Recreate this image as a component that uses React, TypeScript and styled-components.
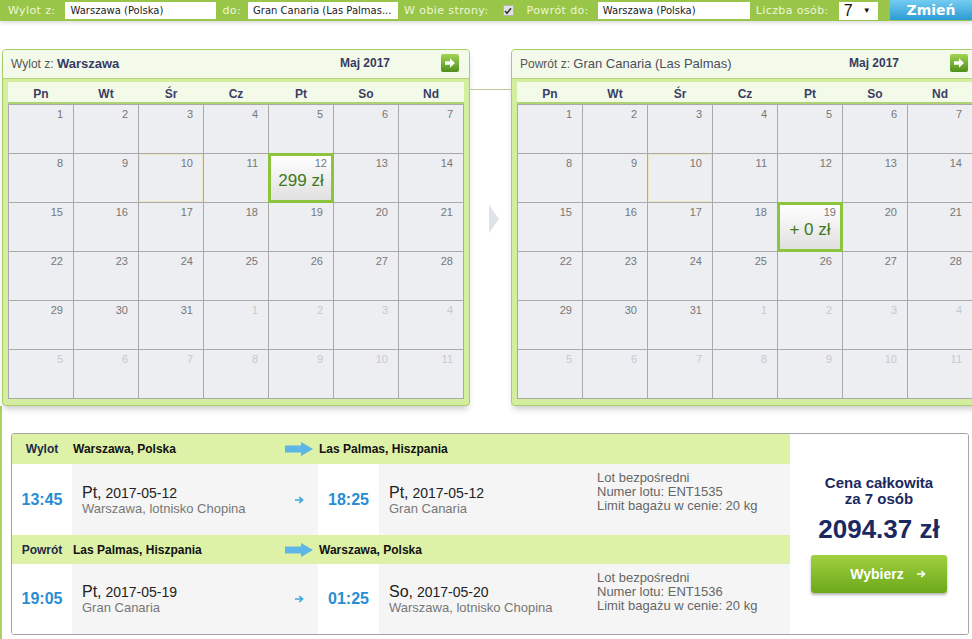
import styled, { createGlobalStyle } from "styled-components";

const GlobalStyle = createGlobalStyle`
  html, body {
    margin: 0;
    padding: 0;
    background: #fff;
    overflow: hidden;
  }
  body {
    width: 972px;
    height: 639px;
    font-family: "Liberation Sans", Arial, sans-serif;
  }
  * {
    box-sizing: border-box;
  }
`;

/* ---------- top search bar ---------- */

const TopBar = styled.div`
  position: relative;
  z-index: 2;
  height: 21px;
  display: flex;
  align-items: center;
  padding-left: 8px;
  background: #99c648;
  box-shadow: 0 2px 4px rgba(0, 0, 0, 0.14);
  font-family: "DejaVu Sans", Verdana, sans-serif;
  font-size: 11px;
  color: #eef6da;
  white-space: nowrap;
`;

const BarLabel = styled.span<{ $ml?: number }>`
  margin-left: ${({ $ml }) => $ml ?? 0}px;
  letter-spacing: 0.4px;
`;

const BarInput = styled.div<{ $ml: number; $w: number }>`
  margin-left: ${({ $ml }) => $ml}px;
  width: ${({ $w }) => $w}px;
  height: 17px;
  padding-left: 5px;
  background: #fff;
  color: #222;
  font-size: 10px;
  line-height: 17px;
  overflow: hidden;
`;

const CheckBox = styled.span`
  margin-left: 14px;
  width: 11px;
  height: 11px;
  display: flex;
  align-items: center;
  justify-content: center;
  border: 1px solid #b4b4b4;
  background: #e2e2e2;
`;

const BarSelect = styled.div`
  margin-left: 10px;
  width: 39px;
  height: 18px;
  display: flex;
  align-items: center;
  justify-content: space-between;
  padding: 0 7px 0 5px;
  background: #fff;
  color: #111;
  font-family: "Liberation Sans", Arial, sans-serif;
  font-size: 16px;
  span {
    font-size: 8px;
  }
`;

const ChangeButton = styled.div`
  align-self: flex-start;
  margin-left: auto;
  width: 82px;
  height: 20px;
  background: linear-gradient(#74ccf1, #2c9bd4);
  color: #fff;
  font-weight: bold;
  font-size: 14px;
  line-height: 20px;
  text-align: center;
`;

/* ---------- calendars ---------- */

const CalendarRow = styled.div`
  display: flex;
  padding: 28px 0 0 2px;
`;

const Panel = styled.div`
  flex-shrink: 0;
  width: 468px;
  padding: 0 5px 6px;
  border: 1px solid #a8cf66;
  border-radius: 4px;
  background: #d3ee9e;
  box-shadow: 0 5px 6px -2px rgba(0, 0, 0, 0.2);
`;

const PanelHeader = styled.div`
  height: 29px;
  margin: 0 -5px 3px;
  display: flex;
  align-items: center;
  padding: 0 10px 2px 8px;
  background: #f4fae9;
  border-bottom: 1px solid #b3d679;
  border-radius: 3px 3px 0 0;
`;

const Title = styled.div`
  flex: 1;
  font-size: 12px;
  color: #555;
  white-space: nowrap;
`;

const TitleCity = styled.span<{ $bold?: boolean }>`
  font-size: 13px;
  font-weight: ${({ $bold }) => ($bold ? "bold" : "normal")};
  color: ${({ $bold }) => ($bold ? "#363b63" : "#4a4d63")};
`;

const Month = styled.div`
  width: 100px;
  margin-right: 26px;
  text-align: center;
  font-size: 12px;
  font-weight: bold;
  color: #363b63;
`;

const DayHeader = styled.div`
  height: 22px;
  display: grid;
  grid-template-columns: repeat(7, 64px);
  column-gap: 1px;
  padding: 4px 1px 0;
  align-items: center;
  background: #f4fae8;
  border-bottom: 2px solid #aed471;
  font-size: 12px;
  font-weight: bold;
  color: #3a3e66;
  text-align: center;
`;

const Grid = styled.div`
  display: grid;
  grid-template-columns: repeat(7, 64px);
  grid-auto-rows: 48px;
  gap: 1px;
  padding: 1px;
  background: #a9a9a9;
`;

const Cell = styled.div<{ $today?: boolean; $picked?: boolean }>`
  background: ${({ $picked }) => ($picked ? "linear-gradient(#ffffff, #e0e0e0)" : "#eceef1")};
  border: ${({ $picked }) => ($picked ? "3px solid #8dc43d" : "none")};
  margin: ${({ $picked }) => ($picked ? "-1px" : "0")};
  box-shadow: ${({ $today }) => ($today ? "inset 0 0 0 1px #ede7c2" : "none")};
`;

const DayNum = styled.div<{ $muted?: boolean; $picked?: boolean }>`
  padding: ${({ $picked }) => ($picked ? "1px 4px 0 0" : "3px 10px 0 0")};
  text-align: right;
  font-size: 11px;
  line-height: 13px;
  color: ${({ $muted }) => ($muted ? "#c6c9cd" : "#777")};
`;

const CellPrice = styled.div`
  margin-top: 1px;
  text-align: center;
  font-size: 17px;
  line-height: 20px;
  color: #3f7a20;
`;

const Gutter = styled.div`
  flex-shrink: 0;
  width: 41px;
  display: flex;
  flex-direction: column;
`;

const Connector = styled.div`
  height: 1px;
  margin-top: 40px;
  background: #b7c99d;
`;

const GutterArrow = styled.svg`
  margin: 115px 0 0 19px;
`;

/* ---------- flight summary ---------- */

const Results = styled.div`
  height: 233px;
  border-left: 2px solid #aad166;
  padding: 27px 0 0 9px;
`;

const Summary = styled.div`
  width: 958px;
  height: 202px;
  display: flex;
  border: 1px solid #a4a4a4;
  border-radius: 3px;
  overflow: hidden;
`;

const Flights = styled.div`
  width: 778px;
  display: flex;
  flex-direction: column;
`;

const LegHeader = styled.div<{ $h: number }>`
  height: ${({ $h }) => $h}px;
  display: grid;
  grid-template-columns: 60px 208px 38px 1fr;
  align-items: center;
  background: #def2a7;
  font-size: 12px;
  font-weight: bold;
  color: #111;
`;

const LegLabel = styled.div`
  text-align: center;
  color: #1f2b48;
`;

const LegCity = styled.div`
  padding-left: 1px;
`;

const Centered = styled.div`
  display: flex;
  justify-content: center;
`;

const LegBody = styled.div<{ $h: number }>`
  height: ${({ $h }) => $h}px;
  display: grid;
  grid-template-columns: 60px 208px 38px 61px 208px 1fr;
  background: #f5f5f5;
`;

const TimeCell = styled.div`
  display: flex;
  align-items: center;
  justify-content: center;
  background: #fff;
  font-size: 16px;
  font-weight: bold;
  color: #2a8dd2;
`;

const DateCell = styled.div`
  display: flex;
  flex-direction: column;
  justify-content: center;
  padding: 1px 0 0 10px;
`;

const DayLine = styled.div`
  font-size: 14px;
  line-height: 16px;
  color: #222;
  b {
    font-weight: normal;
    font-size: 16px;
  }
`;

const Place = styled.div`
  font-size: 13px;
  line-height: 15px;
  color: #777;
`;

const ArrowCell = styled.div`
  display: flex;
  align-items: center;
  justify-content: center;
`;

const InfoCell = styled.div`
  padding: 7px 0 0 10px;
  font-size: 13px;
  line-height: 14px;
  color: #666;
`;

const PriceBox = styled.div`
  flex: 1;
  display: flex;
  flex-direction: column;
  align-items: center;
  justify-content: center;
  background: #fff;
  color: #1b2960;
  font-weight: bold;
`;

const PriceLabel = styled.div`
  font-size: 15px;
  line-height: 16px;
  text-align: center;
`;

const PriceValue = styled.div`
  margin-top: 8px;
  font-size: 26px;
  line-height: 28px;
`;

const SelectButton = styled.div`
  margin-top: 12px;
  width: 136px;
  height: 38px;
  display: flex;
  align-items: center;
  justify-content: center;
  gap: 13px;
  padding-left: 18px;
  border-radius: 3px;
  background: linear-gradient(#9fd03f, #6da81b);
  box-shadow: 0 2px 3px rgba(0, 0, 0, 0.3);
  color: #fff;
  font-size: 14px;
`;

/* ---------- drawings ---------- */

const NextButton = ({ id }: { id: string }) => (
  <svg width="18" height="18" viewBox="0 0 18 18">
    <defs>
      <linearGradient id={id} x1="0" y1="0" x2="0" y2="1">
        <stop offset="0" stopColor="#a2d452" />
        <stop offset="1" stopColor="#4f8f1c" />
      </linearGradient>
    </defs>
    <rect width="18" height="18" rx="2" fill={`url(#${id})`} />
    <polygon points="4,7.3 9,7.3 9,4.3 14,9 9,13.7 9,10.7 4,10.7" fill="#fff" />
  </svg>
);

const BigArrow = () => (
  <svg width="28" height="14" viewBox="0 0 28 14">
    <polygon points="0,3.5 16,3.5 16,0 28,7 16,14 16,10.5 0,10.5" fill="#5cb6e6" />
  </svg>
);

const SmallArrow = ({ color }: { color: string }) => (
  <svg width="9" height="8" viewBox="0 0 9 8">
    <path d="M0 4h7.5M4.3 1l3.2 3-3.2 3" stroke={color} strokeWidth="1.7" fill="none" />
  </svg>
);

/* ---------- data ---------- */

type Day = { n: number; muted?: boolean };

const days: Day[] = [
  ...Array.from({ length: 31 }, (_, i) => ({ n: i + 1 })),
  ...Array.from({ length: 11 }, (_, i) => ({ n: i + 1, muted: true })),
];

const weekDays = ["Pn", "Wt", "Śr", "Cz", "Pt", "So", "Nd"];

type CalendarProps = {
  label: string;
  city: string;
  boldCity?: boolean;
  pickedDay: number;
  price: string;
  id: string;
};

const Calendar = ({ label, city, boldCity, pickedDay, price, id }: CalendarProps) => (
  <Panel>
    <PanelHeader>
      <Title>
        {label} <TitleCity $bold={boldCity}>{city}</TitleCity>
      </Title>
      <Month>Maj 2017</Month>
      <NextButton id={id} />
    </PanelHeader>
    <DayHeader>
      {weekDays.map((d) => (
        <div key={d}>{d}</div>
      ))}
    </DayHeader>
    <Grid>
      {days.map((d, i) => {
        const picked = !d.muted && d.n === pickedDay;
        return (
          <Cell key={i} $picked={picked} $today={!d.muted && d.n === 10}>
            <DayNum $muted={d.muted} $picked={picked}>
              {d.n}
            </DayNum>
            {picked && <CellPrice>{price}</CellPrice>}
          </Cell>
        );
      })}
    </Grid>
  </Panel>
);

type Leg = {
  label: string;
  from: string;
  to: string;
  depTime: string;
  depDay: string;
  depDate: string;
  depPlace: string;
  arrTime: string;
  arrDay: string;
  arrDate: string;
  arrPlace: string;
  flight: string;
};

const legs: Leg[] = [
  {
    label: "Wylot",
    from: "Warszawa, Polska",
    to: "Las Palmas, Hiszpania",
    depTime: "13:45",
    depDay: "Pt,",
    depDate: "2017-05-12",
    depPlace: "Warszawa, lotnisko Chopina",
    arrTime: "18:25",
    arrDay: "Pt,",
    arrDate: "2017-05-12",
    arrPlace: "Gran Canaria",
    flight: "ENT1535",
  },
  {
    label: "Powrót",
    from: "Las Palmas, Hiszpania",
    to: "Warszawa, Polska",
    depTime: "19:05",
    depDay: "Pt,",
    depDate: "2017-05-19",
    depPlace: "Gran Canaria",
    arrTime: "01:25",
    arrDay: "So,",
    arrDate: "2017-05-20",
    arrPlace: "Warszawa, lotnisko Chopina",
    flight: "ENT1536",
  },
];

export default function App() {
  return (
    <>
      <GlobalStyle />
      <TopBar>
        <BarLabel>Wylot z:</BarLabel>
        <BarInput $ml={10} $w={151}>Warszawa (Polska)</BarInput>
        <BarLabel $ml={6}>do:</BarLabel>
        <BarInput $ml={7} $w={150}>Gran Canaria (Las Palmas...</BarInput>
        <BarLabel $ml={6}>W obie strony:</BarLabel>
        <CheckBox>
          <svg width="8" height="8" viewBox="0 0 8 8">
            <path d="M1 4l2 2.2L7 1.2" stroke="#333" strokeWidth="1.6" fill="none" />
          </svg>
        </CheckBox>
        <BarLabel $ml={13}>Powrót do:</BarLabel>
        <BarInput $ml={9} $w={152}>Warszawa (Polska)</BarInput>
        <BarLabel $ml={6}>Liczba osób:</BarLabel>
        <BarSelect>
          7<span>▼</span>
        </BarSelect>
        <ChangeButton>Zmień</ChangeButton>
      </TopBar>

      <CalendarRow>
        <Calendar label="Wylot z:" city="Warszawa" boldCity pickedDay={12} price="299 zł" id="nextA" />
        <Gutter>
          <Connector />
          <GutterArrow width="10" height="28" viewBox="0 0 10 28">
            <polygon points="0,0 10,14 0,28" fill="#dfe3e7" />
          </GutterArrow>
        </Gutter>
        <Calendar
          label="Powrót z:"
          city="Gran Canaria (Las Palmas)"
          pickedDay={19}
          price="+ 0 zł"
          id="nextB"
        />
      </CalendarRow>

      <Results>
        <Summary>
          <Flights>
            {legs.map((leg, i) => (
              <div key={leg.label}>
                <LegHeader $h={i === 0 ? 30 : 29}>
                  <LegLabel>{leg.label}</LegLabel>
                  <LegCity>{leg.from}</LegCity>
                  <Centered>
                    <BigArrow />
                  </Centered>
                  <LegCity>{leg.to}</LegCity>
                </LegHeader>
                <LegBody $h={i === 0 ? 71 : 70}>
                  <TimeCell>{leg.depTime}</TimeCell>
                  <DateCell>
                    <DayLine>
                      <b>{leg.depDay}</b> {leg.depDate}
                    </DayLine>
                    <Place>{leg.depPlace}</Place>
                  </DateCell>
                  <ArrowCell>
                    <SmallArrow color="#3aa5de" />
                  </ArrowCell>
                  <TimeCell>{leg.arrTime}</TimeCell>
                  <DateCell>
                    <DayLine>
                      <b>{leg.arrDay}</b> {leg.arrDate}
                    </DayLine>
                    <Place>{leg.arrPlace}</Place>
                  </DateCell>
                  <InfoCell>
                    Lot bezpośredni
                    <br />
                    Numer lotu: {leg.flight}
                    <br />
                    Limit bagażu w cenie: 20 kg
                  </InfoCell>
                </LegBody>
              </div>
            ))}
          </Flights>
          <PriceBox>
            <PriceLabel>
              Cena całkowita
              <br />
              za 7 osób
            </PriceLabel>
            <PriceValue>2094.37 zł</PriceValue>
            <SelectButton>
              Wybierz
              <SmallArrow color="#fff" />
            </SelectButton>
          </PriceBox>
        </Summary>
      </Results>
    </>
  );
}
